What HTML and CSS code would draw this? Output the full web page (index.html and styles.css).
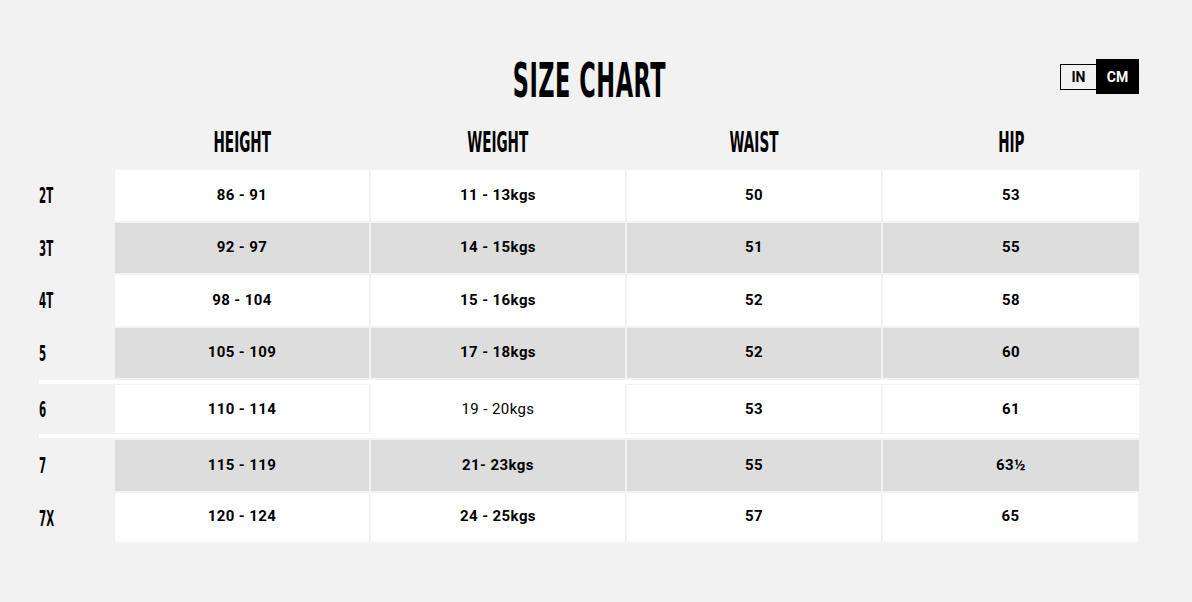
FILE: index.html
```html
<!DOCTYPE html>
<html>
<head>
<meta charset="utf-8">
<link rel="stylesheet" href="styles.css">
</head>
<body>
<div class="chart">
  <div class="top">
    <div class="spacer"></div>
    <h1 class="title"><span class="squeeze">SIZE CHART</span></h1>
    <div class="units">
      <span class="unit unit-in">IN</span>
      <span class="unit unit-cm">CM</span>
    </div>
  </div>
  <div class="row head">
    <div></div>
    <div class="th"><span class="squeeze">HEIGHT</span></div>
    <div class="th"><span class="squeeze">WEIGHT</span></div>
    <div class="th"><span class="squeeze">WAIST</span></div>
    <div class="th"><span class="squeeze">HIP</span></div>
  </div>
  <div class="rows">
    <div class="row white">
      <div class="label"><span class="squeeze-l">2T</span></div>
      <div class="cell">86 - 91</div><div class="cell">11 - 13kgs</div><div class="cell">50</div><div class="cell">53</div>
    </div>
    <div class="row gray">
      <div class="label"><span class="squeeze-l">3T</span></div>
      <div class="cell">92 - 97</div><div class="cell">14 - 15kgs</div><div class="cell">51</div><div class="cell">55</div>
    </div>
    <div class="row white">
      <div class="label"><span class="squeeze-l">4T</span></div>
      <div class="cell">98 - 104</div><div class="cell">15 - 16kgs</div><div class="cell">52</div><div class="cell">58</div>
    </div>
    <div class="row gray">
      <div class="label"><span class="squeeze-l">5</span></div>
      <div class="cell">105 - 109</div><div class="cell">17 - 18kgs</div><div class="cell">52</div><div class="cell">60</div>
    </div>
    <div class="row white barred">
      <div class="label"><span class="squeeze-l">6</span></div>
      <div class="cell">110 - 114</div><div class="cell regular">19 - 20kgs</div><div class="cell">53</div><div class="cell">61</div>
    </div>
    <div class="row gray">
      <div class="label"><span class="squeeze-l">7</span></div>
      <div class="cell">115 - 119</div><div class="cell">21- 23kgs</div><div class="cell">55</div><div class="cell">63½</div>
    </div>
    <div class="row white last">
      <div class="label"><span class="squeeze-l">7X</span></div>
      <div class="cell">120 - 124</div><div class="cell">24 - 25kgs</div><div class="cell">57</div><div class="cell">65</div>
    </div>
  </div>
</div>
</body>
</html>
```

FILE: styles.css
```css
html, body {
  margin: 0;
  padding: 0;
  background: #f2f2f2;
}

body {
  font-family: Roboto, "DejaVu Sans", sans-serif;
  color: #000;
}

.chart {
  width: 1100px;
  margin-left: 39px;
  padding-top: 50px;
}

.top {
  display: grid;
  grid-template-columns: 1fr auto 1fr;
  height: 60px;
  align-items: center;
}

.title {
  margin: 0;
  font-family: "DejaVu Sans Condensed", "DejaVu Sans", sans-serif;
  font-stretch: condensed;
  font-weight: bold;
  font-size: 48px;
  line-height: 1;
  text-align: center;
  letter-spacing: 1px;
}

.squeeze {
  display: inline-block;
  transform: scaleX(0.52);
  transform-origin: center;
  white-space: nowrap;
}

.squeeze-l {
  display: inline-block;
  transform: scaleX(0.52);
  transform-origin: left center;
  white-space: nowrap;
}

.units {
  justify-self: end;
  align-self: start;
  margin-top: 9px;
  display: flex;
  align-items: center;
}

.unit {
  display: flex;
  align-items: center;
  justify-content: center;
  font-weight: bold;
  font-size: 14px;
  box-sizing: border-box;
}

.unit-in {
  width: 36px;
  height: 26px;
  border: 1px solid #000;
  border-right: none;
  color: #000;
}

.unit-cm {
  width: 43px;
  height: 35px;
  background: #000;
  color: #fff;
}

.row {
  display: grid;
  grid-template-columns: 74px 254px 254px 254px 1fr;
  column-gap: 2px;
}

.head {
  height: 56px;
  padding-top: 4px;
  align-items: center;
}

.th {
  text-align: center;
  font-family: "DejaVu Sans Condensed", "DejaVu Sans", sans-serif;
  font-stretch: condensed;
  font-weight: bold;
  font-size: 29px;
  line-height: 1;
}

.rows {
  display: flex;
  flex-direction: column;
  gap: 2px;
}

.row:not(.head) {
  height: 50.5px;
}

.label {
  display: flex;
  align-items: center;
  font-family: "DejaVu Sans Condensed", "DejaVu Sans", sans-serif;
  font-stretch: condensed;
  font-weight: bold;
  font-size: 22px;
  padding-top: 1px;
}

.cell {
  display: flex;
  align-items: center;
  justify-content: center;
  font-weight: bold;
  font-size: 15px;
  letter-spacing: 0.4px;
  padding-bottom: 1px;
}

.white .cell {
  background: #fff;
}

.gray .cell {
  background: #dddddd;
}

.cell.regular {
  font-weight: normal;
}

.row.barred {
  height: 50px;
  border-top: 4px solid #fff;
  border-bottom: 4px solid #fff;
}

.row.barred .cell {
  box-shadow: inset 0 1px 0 #f2f2f2, inset 0 -1px 0 #f2f2f2;
}

.row.barred .cell.regular {
  box-shadow: none;
}

.row.last .cell {
  border-bottom: 2px solid #f8f8f8;
}

.row.last {
  width: 1099px;
}
```
